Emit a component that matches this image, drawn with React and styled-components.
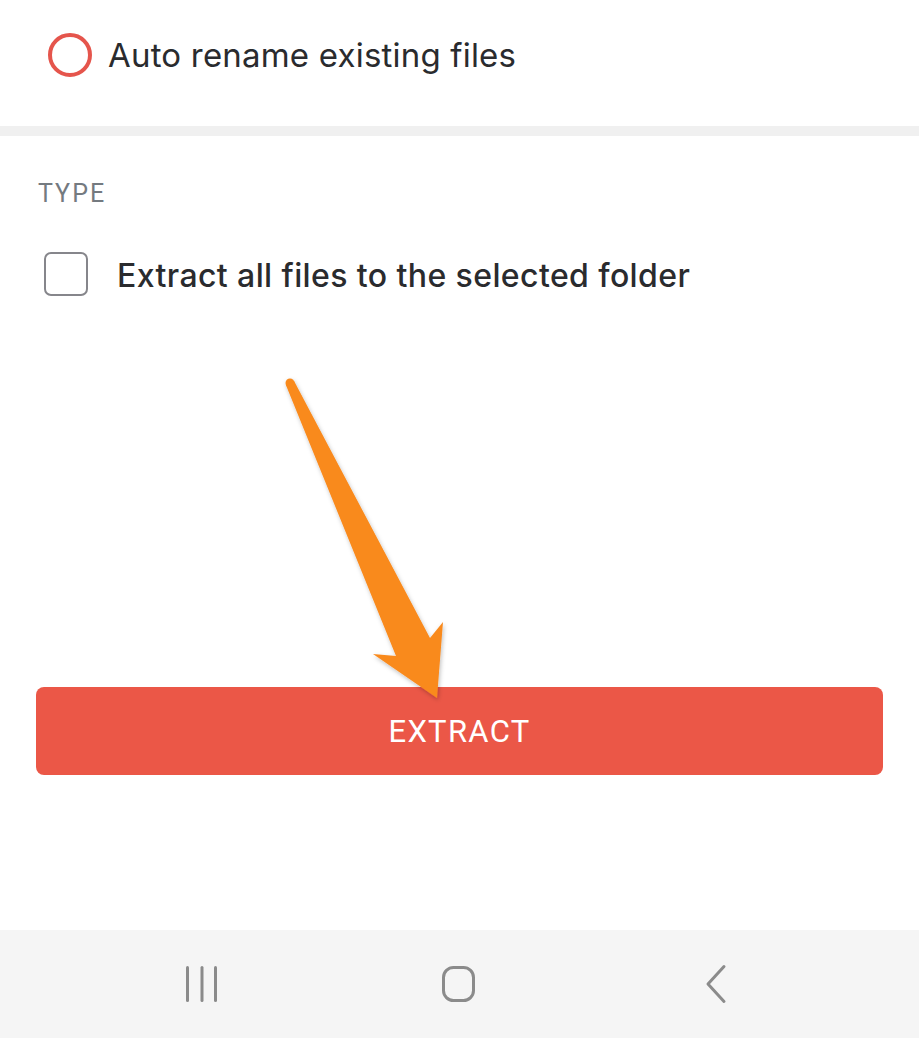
import React from "react";
import styled, { createGlobalStyle } from "styled-components";

const Global = createGlobalStyle`
  html, body { margin: 0; padding: 0; background: #ffffff; }
  body { font-family: Inter, "Noto Sans", sans-serif; }
`;

const Screen = styled.div`
  position: relative;
  width: 919px;
  height: 1038px;
  display: flex;
  flex-direction: column;
  background: #ffffff;
  overflow: hidden;
`;

const OptionSection = styled.section`
  height: 126px;
  box-sizing: border-box;
  padding: 33px 0 0 48px;
`;

const Row = styled.label`
  display: flex;
  align-items: center;
  gap: ${(p) => p.$gap}px;
`;

const Radio = styled.span`
  width: 44px;
  height: 44px;
  box-sizing: border-box;
  border-radius: 50%;
  border: 4px solid #e5554c;
  flex: none;
`;

const Label = styled.span`
  font-family: Inter, "Noto Sans", sans-serif;
  font-size: ${(p) => p.$size}px;
  font-weight: ${(p) => p.$weight};
  letter-spacing: ${(p) => p.$spacing}px;
  padding-top: ${(p) => p.$offset || 0}px;
  color: #2a2b2e;
  line-height: 40px;
  white-space: nowrap;
`;

const Divider = styled.div`
  height: 10px;
  background: #f0f0f0;
  flex: none;
`;

const TypeSection = styled.section`
  flex: 1;
  display: flex;
  flex-direction: column;
  padding: 43px 36px 0 38px;
`;

const SectionTitle = styled.div`
  font-family: Roboto, "Liberation Sans", sans-serif;
  font-size: 25px;
  line-height: 30px;
  color: #747a80;
  letter-spacing: 2px;
`;

const CheckRow = styled(Row)`
  margin: 43px 0 0 6px;
`;

const Checkbox = styled.span`
  width: 44px;
  height: 44px;
  box-sizing: border-box;
  border: 2px solid #86868b;
  border-radius: 7px;
  flex: none;
`;

const Spacer = styled.div`
  flex: 1;
`;

const ExtractButton = styled.button`
  margin: 0 0 155px -2px;
  height: 88px;
  width: 847px;
  border: none;
  border-radius: 8px;
  background: #eb5747;
  color: #ffffff;
  font-family: Roboto, "Liberation Sans", sans-serif;
  font-size: 31px;
  font-weight: 400;
  letter-spacing: 1.3px;
  cursor: pointer;
`;

const NavBar = styled.nav`
  height: 108px;
  flex: none;
  box-sizing: border-box;
  background: #f5f5f5;
  display: flex;
  align-items: center;
  padding-left: 182px;
  gap: 217px;
`;

const NavIcon = styled.svg`
  display: block;
  flex: none;
`;

const ArrowOverlay = styled.svg`
  position: absolute;
  left: 0;
  top: 0;
  pointer-events: none;
`;

export default function App() {
  return (
    <>
      <Global />
      <Screen>
        <OptionSection>
          <Row $gap={16}>
            <Radio />
            <Label $size={33} $weight={400} $spacing={0.2}>
              Auto rename existing files
            </Label>
          </Row>
        </OptionSection>
        <Divider />
        <TypeSection>
          <SectionTitle>TYPE</SectionTitle>
          <CheckRow $gap={29}>
            <Checkbox />
            <Label $size={32} $weight={500} $spacing={0.4} $offset={4}>
              Extract all files to the selected folder
            </Label>
          </CheckRow>
          <Spacer />
          <ExtractButton>EXTRACT</ExtractButton>
        </TypeSection>
        <NavBar>
          <NavIcon width="40" height="40" viewBox="0 0 40 40">
            <g stroke="#8b8b8b" strokeWidth="3" strokeLinecap="round">
              <line x1="5.5" y1="3.5" x2="5.5" y2="36.5" />
              <line x1="20" y1="3.5" x2="20" y2="36.5" />
              <line x1="33.5" y1="3.5" x2="33.5" y2="36.5" />
            </g>
          </NavIcon>
          <NavIcon width="40" height="40" viewBox="0 0 40 40">
            <rect x="4.5" y="3.5" width="30" height="33" rx="10" fill="none" stroke="#8b8b8b" strokeWidth="3" />
          </NavIcon>
          <NavIcon width="40" height="40" viewBox="0 0 40 40">
            <polyline points="28,2.5 12,20 28,37.5" fill="none" stroke="#8b8b8b" strokeWidth="3" strokeLinecap="round" strokeLinejoin="round" />
          </NavIcon>
        </NavBar>
        <ArrowOverlay width="919" height="1038" viewBox="0 0 919 1038">
          <defs>
            <filter id="arrowShadow" x="-20%" y="-20%" width="140%" height="140%">
              <feDropShadow dx="1" dy="2" stdDeviation="2" floodColor="#000" floodOpacity="0.25" />
            </filter>
          </defs>
          <g filter="url(#arrowShadow)" fill="#f98a1e">
            <circle cx="290" cy="383" r="4.5" />
            <polygon points="285.8,384.8 294.2,381.2 430,638 443,622 437,698 373,654 396,656" />
          </g>
        </ArrowOverlay>
      </Screen>
    </>
  );
}
